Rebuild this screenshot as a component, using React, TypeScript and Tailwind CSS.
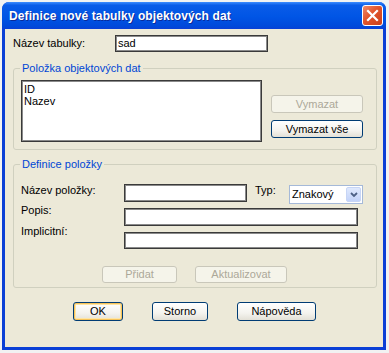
import React from "react";

const btn =
  "flex items-center justify-center rounded-[3px] border border-[#003C74] bg-[linear-gradient(to_bottom,#ffffff_0%,#f4f3ee_60%,#e3e0d6_100%)] text-black leading-[13px]";
const btnDis =
  "flex items-center justify-center rounded-[3px] border border-[#C9C7BA] bg-[#F5F4EA] text-[#ACA899] leading-[13px]";
const input =
  "bg-white border border-[#3a3a3a] shadow-[inset_0_0_0_1px_#8a8a8a]";

export default function App() {
  return (
    <div
      className="w-[389px] h-[353px] bg-[#f2f2f2] pt-[2px] pl-[2px] text-[11px] text-black"
      style={{ fontFamily: '"Liberation Sans", Arial, sans-serif' }}
    >
      <div className="w-[384px] h-[348px] flex flex-col rounded-t-[7px] bg-[#0A3FD6] overflow-hidden">
        {/* Title bar */}
        <div className="h-[27px] flex items-center justify-between pl-[7px] pr-[3px] bg-[linear-gradient(to_bottom,#3d8dff_0%,#0a5ce8_12%,#0055e5_55%,#0049da_90%,#0a3fd6_100%)]">
          <span className="text-white font-bold text-[12px] leading-[14px] tracking-[0.1px] [text-shadow:1px_1px_0_#0a2a9a]">
            Definice nové tabulky objektových dat
          </span>
          <div className="w-[21px] h-[21px] rounded-[3px] border border-white bg-[linear-gradient(135deg,#f08a6a_0%,#e2542b_45%,#c9401c_100%)] flex items-center justify-center">
            <svg width="13" height="13" viewBox="0 0 13 13">
              <path d="M2 2 L11 11 M11 2 L2 11" stroke="white" strokeWidth="2.2" strokeLinecap="square" />
            </svg>
          </div>
        </div>

        {/* Body */}
        <div className="flex-1 mx-[3px] mb-[3px] bg-[#ECE9D8] flex flex-col pl-[8px]">
          {/* Row 1 */}
          <div className="flex items-start mt-[6px]">
            <span className="w-[102px] mt-[2px] leading-[13px]">Název tabulky:</span>
            <div className={`${input} w-[153px] h-[17px] pl-[2px] leading-[15px]`}>sad</div>
          </div>

          {/* Group 1 */}
          <fieldset className="w-[364px] mt-[10px] border border-[#D0D0BF] rounded-[3px] px-[7px] pb-[7px]">
            <legend className="px-[2px] -ml-[1px] text-[#0046D5] leading-[13px]">Položka objektových dat</legend>
            <div className="flex items-start pt-[5px]">
              <div className={`${input} w-[241px] h-[62px] pl-[2px] pt-[2px] leading-[12px]`}>
                <div>ID</div>
                <div>Nazev</div>
              </div>
              <div className="flex flex-col ml-[9px]">
                <div className={`${btnDis} w-[92px] h-[18px] mt-[15px]`}>Vymazat</div>
                <div className={`${btn} w-[92px] h-[18px] mt-[7px]`}>Vymazat vše</div>
              </div>
            </div>
          </fieldset>

          {/* Group 2 */}
          <fieldset className="w-[364px] mt-[8px] border border-[#D0D0BF] rounded-[3px] px-[7px] pb-[4px]">
            <legend className="px-[2px] -ml-[1px] text-[#0046D5] leading-[13px]">Definice položky</legend>
            <div className="flex items-start pt-[13px]">
              <span className="w-[103px] leading-[13px]">Název položky:</span>
              <div className={`${input} w-[123px] h-[18px]`} />
              <span className="w-[34px] ml-[8px] leading-[13px]">Typ:</span>
              <div className="w-[74px] h-[19px] mt-[1px] bg-white border border-[#A5B9D8] flex items-center justify-between pl-[2px] pr-[1px]">
                <span className="leading-[13px]">Znakový</span>
                <div className="w-[15px] h-[15px] rounded-[2px] bg-[linear-gradient(to_bottom,#dfe9fd_0%,#c3d3f9_100%)] border border-[#c7d5f5] flex items-center justify-center">
                  <svg width="8" height="6" viewBox="0 0 8 6">
                    <path d="M1 1 L4 4 L7 1" stroke="#4d6185" strokeWidth="1.8" fill="none" />
                  </svg>
                </div>
              </div>
            </div>
            <div className="flex items-start mt-[4px]">
              <span className="w-[103px] -mt-[4px] leading-[13px]">Popis:</span>
              <div className={`${input} w-[234px] h-[18px]`} />
            </div>
            <div className="flex items-start mt-[6px]">
              <span className="w-[103px] -mt-[7px] leading-[13px]">Implicitní:</span>
              <div className={`${input} w-[234px] h-[17px]`} />
            </div>
            <div className="flex mt-[17px]">
              <div className={`${btnDis} w-[75px] h-[17px] ml-[81px]`}>Přidat</div>
              <div className={`${btnDis} w-[92px] h-[17px] ml-[18px]`}>Aktualizovat</div>
            </div>
          </fieldset>

          {/* Bottom buttons */}
          <div className="flex mt-[14px]">
            <div className="w-[50px] h-[19px] ml-[60px] rounded-[3px] border border-[#003C74] shadow-[inset_0_0_0_1px_#f7c35a,inset_0_0_0_2px_#fde6a8] bg-[linear-gradient(to_bottom,#ffffff_0%,#f4f3ee_60%,#e3e0d6_100%)] flex items-center justify-center leading-[13px]">
              OK
            </div>
            <div className={`${btn} w-[56px] h-[19px] ml-[29px]`}>Storno</div>
            <div className={`${btn} w-[79px] h-[19px] ml-[29px]`}>Nápověda</div>
          </div>
        </div>
      </div>
    </div>
  );
}
